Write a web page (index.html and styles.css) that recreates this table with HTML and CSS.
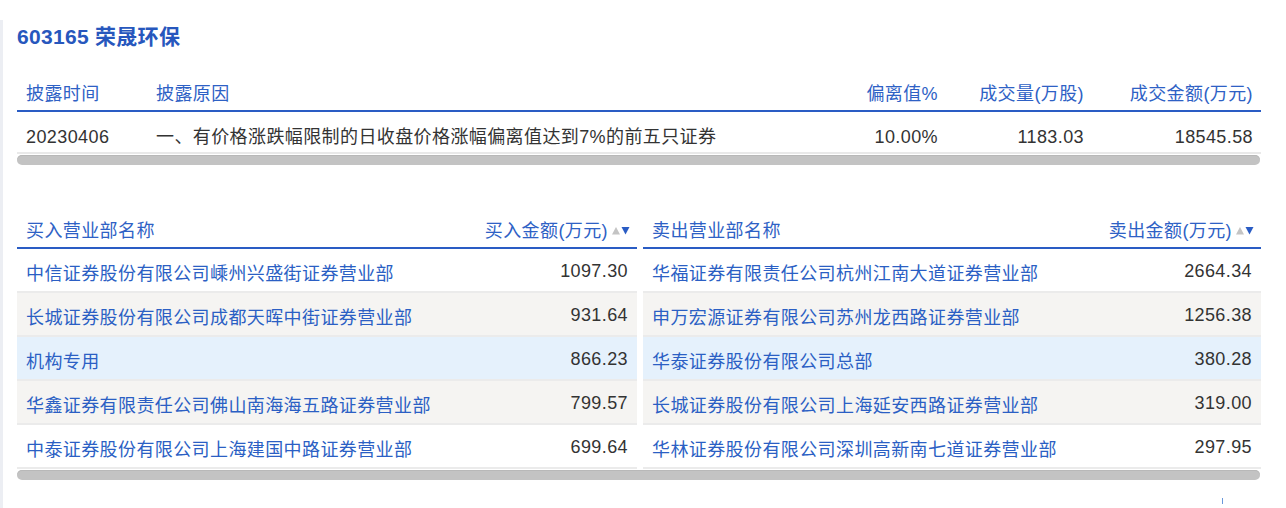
FILE: index.html
```html
<!DOCTYPE html>
<html lang="zh-CN">
<head>
<meta charset="utf-8">
<title>603165 荣晟环保</title>
<link rel="stylesheet" href="styles.css">
</head>
<body>
<div class="page">
  <div class="rail"></div>
  <main class="main">
    <h1 class="title">603165 荣晟环保</h1>

    <section class="summary">
      <div class="srow shead">
        <div class="c">披露时间</div>
        <div class="c">披露原因</div>
        <div class="c r">偏离值%</div>
        <div class="c r">成交量(万股)</div>
        <div class="c r">成交金额(万元)</div>
      </div>
      <div class="srow sbody">
        <div class="c">20230406</div>
        <div class="c">一、有价格涨跌幅限制的日收盘价格涨幅偏离值达到7%的前五只证券</div>
        <div class="c r">10.00%</div>
        <div class="c r">1183.03</div>
        <div class="c r">18545.58</div>
      </div>
      <div class="scroll"><div class="thumb"></div></div>
    </section>

    <section class="trades">
      <div class="tables">
        <div class="tbl">
          <div class="trow thead">
            <div class="name">买入营业部名称</div>
            <div class="amt">买入金额(万元)<svg class="sort" width="18" height="9" viewBox="0 0 18 9"><polygon points="0,8.5 4,1 8,8.5" fill="#c4c4c4"/><polygon points="9.5,1 17.5,1 13.5,8.5" fill="#2a5cc4"/></svg></div>
          </div>
          <div class="trow"><div class="name">中信证券股份有限公司嵊州兴盛街证券营业部</div><div class="amt">1097.30</div></div>
          <div class="trow alt"><div class="name">长城证券股份有限公司成都天晖中街证券营业部</div><div class="amt">931.64</div></div>
          <div class="trow hover"><div class="name">机构专用</div><div class="amt">866.23</div></div>
          <div class="trow alt"><div class="name">华鑫证券有限责任公司佛山南海海五路证券营业部</div><div class="amt">799.57</div></div>
          <div class="trow"><div class="name">中泰证券股份有限公司上海建国中路证券营业部</div><div class="amt">699.64</div></div>
        </div>
        <div class="tbl">
          <div class="trow thead">
            <div class="name">卖出营业部名称</div>
            <div class="amt">卖出金额(万元)<svg class="sort" width="18" height="9" viewBox="0 0 18 9"><polygon points="0,8.5 4,1 8,8.5" fill="#c4c4c4"/><polygon points="9.5,1 17.5,1 13.5,8.5" fill="#2a5cc4"/></svg></div>
          </div>
          <div class="trow"><div class="name">华福证券有限责任公司杭州江南大道证券营业部</div><div class="amt">2664.34</div></div>
          <div class="trow alt"><div class="name">申万宏源证券有限公司苏州龙西路证券营业部</div><div class="amt">1256.38</div></div>
          <div class="trow hover"><div class="name">华泰证券股份有限公司总部</div><div class="amt">380.28</div></div>
          <div class="trow alt"><div class="name">长城证券股份有限公司上海延安西路证券营业部</div><div class="amt">319.00</div></div>
          <div class="trow"><div class="name">华林证券股份有限公司深圳高新南七道证券营业部</div><div class="amt">297.95</div></div>
        </div>
      </div>
      <div class="scroll bottom"><div class="thumb"></div></div>
    </section>
  </main>
  <div class="caret"></div>
</div>
</body>
</html>
```

FILE: styles.css
```css
html, body {
  margin: 0;
  padding: 0;
  background: #ffffff;
}

body {
  font-family: "Liberation Sans", "Noto Sans CJK SC", sans-serif;
  font-size: 18px;
  letter-spacing: 0.4px;
  color: #333333;
}

.page {
  position: relative;
  display: flex;
  width: 1286px;
  height: 508px;
  overflow: hidden;
}

.rail {
  width: 3px;
  margin-top: 20px;
  background: #eceef3;
  flex: none;
}

.main {
  flex: 1;
  padding: 0 25px 0 14px;
}

.title {
  margin: 0;
  padding-top: 24px;
  height: 26px;
  line-height: 26px;
  font-size: 21px;
  font-weight: bold;
  letter-spacing: 0.3px;
  color: #2757bd;
}

/* summary table */
.summary {
  margin-top: 24px;
}

.srow {
  display: grid;
  grid-template-columns: 130px 1fr 120px 146px 169px;
}

.srow .c {
  padding: 0 9px;
  white-space: nowrap;
}

.srow .r {
  text-align: right;
}

.srow .c.r {
  padding-right: 8px;
}

.shead {
  height: 36px;
  align-items: center;
  color: #2e61c5;
  border-bottom: 2px solid #2a5cc4;
}

.sbody {
  padding: 15px 0 5px;
  line-height: 20px;
  border-bottom: 2px solid #e9e9e9;
}

.scroll {
  padding-top: 1px;
}

.thumb {
  height: 10px;
  border-radius: 5px;
  background: #c3c3c3;
  box-shadow: inset 0 1px 0 #b8b8b8;
  margin-right: 1px;
}

/* trades tables */
.trades {
  margin-top: 46px;
}

.tables {
  display: grid;
  grid-template-columns: 620px 618px;
  column-gap: 6px;
}

.trow {
  display: flex;
  align-items: center;
  justify-content: space-between;
  height: 39px;
  padding-top: 3px;
  border-bottom: 2px solid #ebebeb;
  background: #ffffff;
  white-space: nowrap;
}

.trow .name {
  padding-left: 9px;
  color: #2b5fc4;
}

.trow .amt {
  padding-right: 9px;
  color: #333333;
  display: flex;
  align-items: center;
}

.trow.alt {
  background: #f5f4f2;
}

.trow.hover {
  background: #e5f1fc;
}

.thead {
  height: 36px;
  padding-top: 0;
  border-bottom: 2px solid #2a5cc4;
}

.thead .name,
.thead .amt {
  color: #2e61c5;
}

.thead .amt {
  padding-right: 7px;
}

.sort {
  margin-left: 4px;
  margin-top: 2px;
}

.caret {
  position: absolute;
  left: 1222px;
  top: 498px;
  width: 1px;
  height: 6px;
  background: #6a98da;
}
```
